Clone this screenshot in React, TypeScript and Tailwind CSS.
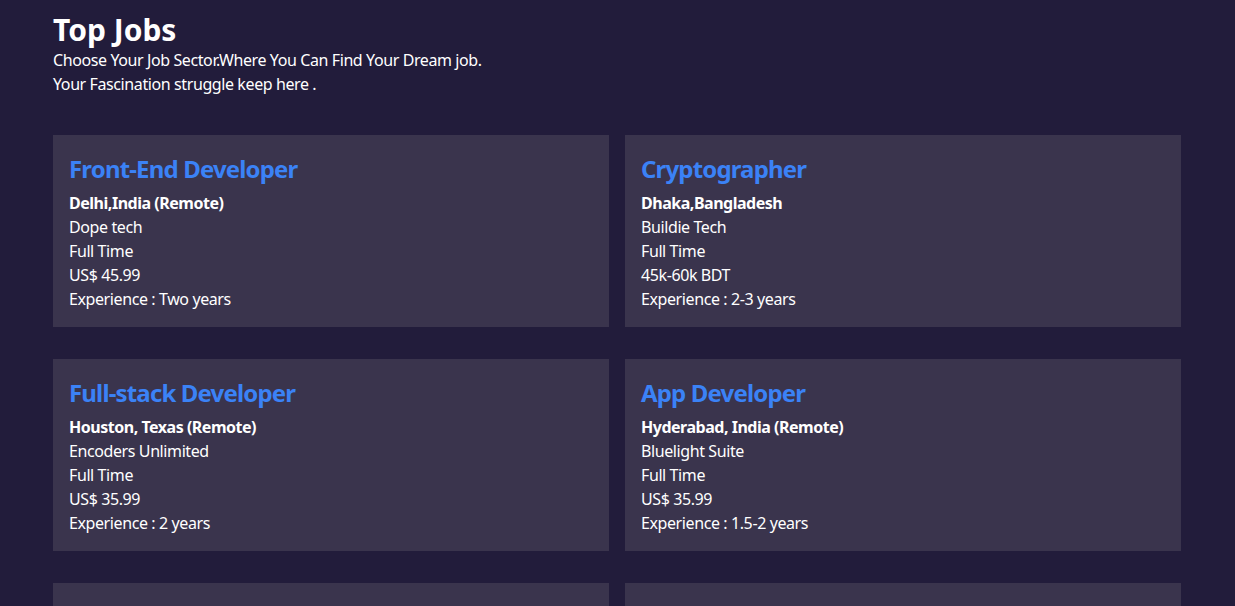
import React from 'react'

interface Job {
  title: string
  location: string
  company: string
  type: string
  salary: string
  experience: string
}

const jobs: Job[] = [
  {
    title: 'Front-End Developer',
    location: 'Delhi,India (Remote)',
    company: 'Dope tech',
    type: 'Full Time',
    salary: 'US$ 45.99',
    experience: 'Two years'
  },
  {
    title: 'Cryptographer',
    location: 'Dhaka,Bangladesh',
    company: 'Buildie Tech',
    type: 'Full Time',
    salary: '45k-60k BDT',
    experience: '2-3 years'
  },
  {
    title: 'Full-stack Developer',
    location: 'Houston, Texas (Remote)',
    company: 'Encoders Unlimited',
    type: 'Full Time',
    salary: 'US$ 35.99',
    experience: '2 years'
  },
  {
    title: 'App Developer',
    location: 'Hyderabad, India (Remote)',
    company: 'Bluelight Suite',
    type: 'Full Time',
    salary: 'US$ 35.99',
    experience: '1.5-2 years'
  },
  {
    title: 'Back-End Developer',
    location: 'Berlin,Germany',
    company: 'Cloudnine Labs',
    type: 'Part Time',
    salary: 'US$ 30.00',
    experience: '1 year'
  },
  {
    title: 'UI/UX Designer',
    location: 'Toronto, Canada (Remote)',
    company: 'Pixel Studio',
    type: 'Full Time',
    salary: 'US$ 40.50',
    experience: '3 years'
  }
]

function JobCard({ job }: { job: Job }) {
  return (
    <div className="bg-[#3a344d] p-4">
      <h2 className="text-2xl font-bold tracking-[-0.035em] text-[#3b82f6] pt-[2px] mb-[6px]">{job.title}</h2>
      <p className="font-bold tracking-[-0.03em]">{job.location}</p>
      <p>{job.company}</p>
      <p>{job.type}</p>
      <p>{job.salary}</p>
      <p>Experience : {job.experience}</p>
    </div>
  )
}

export default function App() {
  return (
    <div className="min-h-screen bg-[#221c3b] text-white tracking-[-0.025em] font-['Segoe_UI','Noto_Sans',sans-serif]">
      <div className="w-[1128px] ml-[53px] pt-[12px] pb-10">
        {/* Header */}
        <div className="mb-[39px]">
          <h1 className="text-3xl font-bold tracking-normal">Top Jobs</h1>
          <p>Choose Your Job Sector.Where You Can Find Your Dream job.</p>
          <p>Your Fascination struggle keep here .</p>
        </div>

        {/* Job list */}
        <div className="grid grid-cols-2 gap-x-4 gap-y-8">
          {jobs.map((job) => (
            <JobCard key={job.title} job={job} />
          ))}
        </div>
      </div>
    </div>
  )
}
